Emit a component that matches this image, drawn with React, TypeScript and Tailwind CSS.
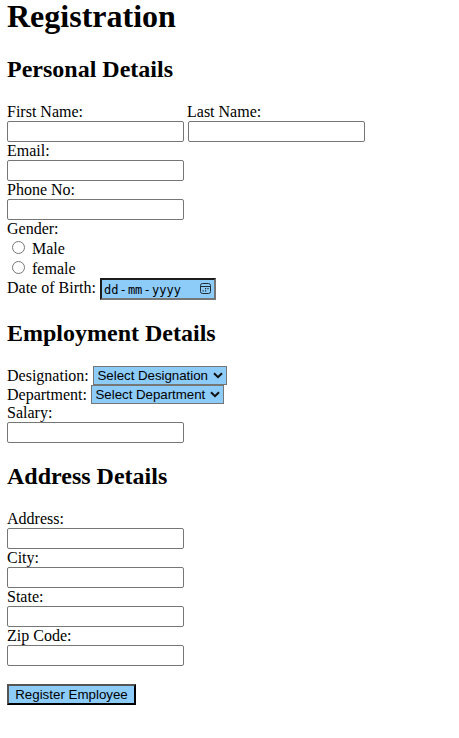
import React from "react";

const inputClass =
  "block h-[21px] w-[177px] rounded-[2px] border border-[#767676] bg-white px-0.5 font-['Liberation_Sans',Arial,sans-serif] text-[13.333px] outline-none";

function Field({ label, name }: { label: string; name: string }) {
  return (
    <div>
      <label htmlFor={name} className="block h-[18px] leading-[18px]">{label}</label>
      <input id={name} name={name} type="text" className={inputClass} />
    </div>
  );
}

function Radio({ label, value }: { label: string; value: string }) {
  return (
    <label className="flex h-[20px] items-center pl-[5px]">
      <input
        type="radio"
        name="gender"
        value={value}
        className="mb-[1px] mr-[7px] block size-[13px] appearance-none rounded-full border border-[#767676] bg-white"
      />
      <span className="leading-[20px] pt-[2px]">{label}</span>
    </label>
  );
}

function SelectBox({ label, option, width, gap }: { label: string; option: string; width: string; gap: string }) {
  return (
    <div className="flex h-[19px] items-center">
      <label className={`shrink-0 leading-[19px] ${gap}`}>{label}</label>
      <div className={`relative h-[19px] ${width}`}>
        <select className="block h-[19px] w-full appearance-none rounded-none border border-[#767676] bg-[#8dcbf8] pl-[3.5px] font-['Liberation_Sans',Arial,sans-serif] text-[13.333px] leading-[17px] tracking-[-0.04px] text-black outline-none">
          <option>{option}</option>
        </select>
        <svg className="pointer-events-none absolute right-[4px] top-[6px]" width="10" height="7" viewBox="0 0 10 7" fill="none">
          <path d="M1 1.2 5 5.1 9 1.2" stroke="#101010" strokeWidth="2" />
        </svg>
      </div>
    </div>
  );
}

function Heading({ children }: { children: React.ReactNode }) {
  return <h2 className="h-[28px] text-[24px] font-bold leading-[28px]">{children}</h2>;
}

export default function App() {
  return (
    <form className="h-[738px] w-full bg-white pl-[7px] font-['Liberation_Serif','Times_New_Roman',serif] text-[16px] text-black">
      <h1 className="h-[35px] text-[32px] font-bold leading-[33px]">Registration</h1>
      <section className="pt-5">
        <Heading>Personal Details</Heading>
        <div className="mt-5">
          <div className="flex h-[18px] leading-[18px]">
            <label htmlFor="first" className="w-[180px]">First Name:</label>
            <label htmlFor="last">Last Name:</label>
          </div>
          <div className="flex gap-1">
            <input id="first" type="text" className={inputClass} />
            <input id="last" type="text" className={inputClass} />
          </div>
          <Field label="Email:" name="email" />
          <Field label="Phone No:" name="phone" />
          <div className="h-[18px] leading-[18px]">Gender:</div>
          <Radio label="Male" value="male" />
          <Radio label="female" value="female" />
          <div className="flex h-[22px]">
            <span className="w-[93px] shrink-0 leading-[20px]">Date of Birth:</span>
            <div className="flex h-[22px] w-[116px] items-center border-2 border-b-[#767676] border-l-[#1c1c1c] border-r-[#767676] border-t-[#1c1c1c] bg-[#8dcbf8] pl-[2px] pr-[2px] pt-[2px] font-['DejaVu_Sans_Mono',monospace] text-[12px] leading-[16px]">
              <span className="w-[15px]">dd</span>
              <span className="w-[9px] pl-[0.5px]">-</span>
              <span className="w-[15px] tracking-[-0.3px]">mm</span>
              <span className="w-[9px] pl-[0.5px]">-</span>
              <span>yyyy</span>
              <svg className="-mt-[4px] ml-auto" width="13" height="13" viewBox="0 0 13 13" fill="none" stroke="#202c35">
                <rect x="1.5" y="1.5" width="10" height="10" rx="2" />
                <path d="M1.5 4.5h10" />
                <path d="M6 6.7h1.2M8.4 6.7h1.2M3.5 8.9h1.2M6 8.9h1.2" strokeWidth="1.3" />
              </svg>
            </div>
          </div>
        </div>
      </section>
      <section className="pt-[19px]">
        <Heading>Employment Details</Heading>
        <div className="mt-[19px]">
          <SelectBox label="Designation:" option="Select Designation" width="w-[134px]" gap="w-[86px]" />
          <SelectBox label="Department:" option="Select Department" width="w-[133px]" gap="w-[84px]" />
          <Field label="Salary:" name="salary" />
        </div>
      </section>
      <section className="pt-[19px]">
        <Heading>Address Details</Heading>
        <div className="mt-5">
          <Field label="Address:" name="address" />
          <Field label="City:" name="city" />
          <Field label="State:" name="state" />
          <Field label="Zip Code:" name="zip" />
        </div>
      </section>
      <button
        type="button"
        className="mt-[18px] block h-[21px] w-[129px] whitespace-nowrap border-2 border-b-black border-l-[#555] border-r-black border-t-[#555] bg-[#8dcbf8] text-center font-['Liberation_Sans',Arial,sans-serif] text-[13.333px] leading-[17px]"
      >
        Register Employee
      </button>
    </form>
  );
}
